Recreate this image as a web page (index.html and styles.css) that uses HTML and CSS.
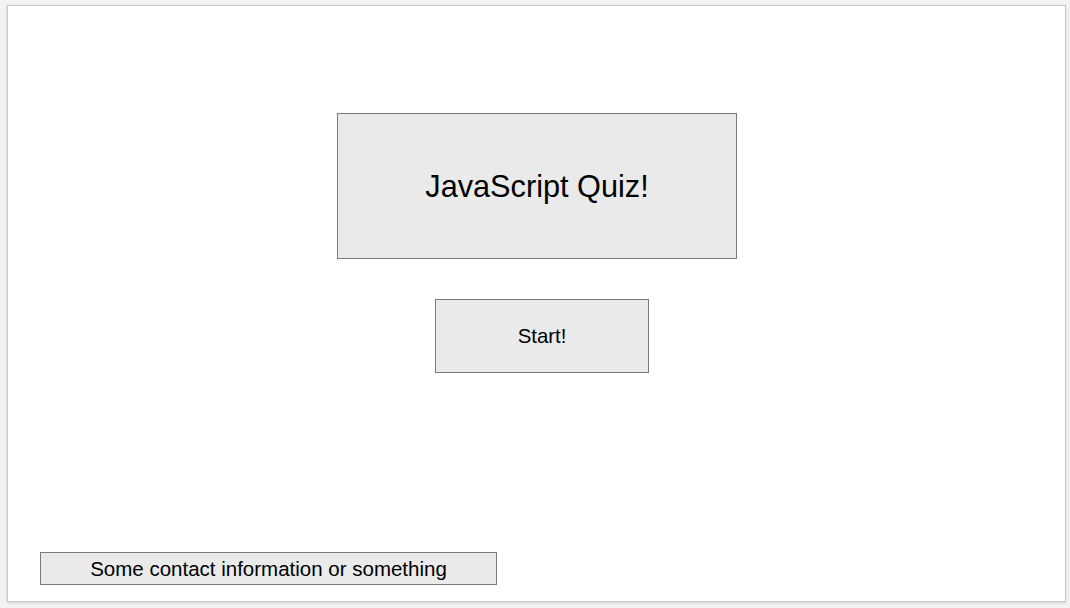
FILE: index.html
```html
<!DOCTYPE html>
<html>
<head>
<meta charset="utf-8">
<link rel="stylesheet" href="styles.css">
</head>
<body>
<div class="slide">
  <div class="title-box">JavaScript Quiz!</div>
  <div class="start-box">Start!</div>
  <div class="spacer"></div>
  <div class="contact-box">Some contact information or something</div>
</div>
</body>
</html>
```

FILE: styles.css
```css
html, body {
  margin: 0;
  padding: 0;
  height: 100%;
}
body {
  background: #f1f3f4;
  font-family: "Liberation Sans", Arial, sans-serif;
  color: #000;
  padding: 5px 0 0 7px;
  box-sizing: border-box;
}
.slide {
  width: 1059px;
  height: 597px;
  box-sizing: border-box;
  background: #fff;
  border: 1px solid #c8c8c8;
  box-shadow: 0 1px 3px rgba(0,0,0,0.12);
  display: flex;
  flex-direction: column;
  align-items: flex-start;
}
.title-box {
  margin: 107px 0 0 329px;
  width: 400px;
  height: 146px;
  box-sizing: border-box;
  background: #eaeaea;
  border: 1px solid #7a7a7a;
  display: flex;
  align-items: center;
  justify-content: center;
  font-size: 30.7px;
  padding-top: 1px;
}
.start-box {
  margin: 40px 0 0 427px;
  width: 214px;
  height: 74px;
  box-sizing: border-box;
  background: #eaeaea;
  border: 1px solid #7a7a7a;
  display: flex;
  align-items: center;
  justify-content: center;
  font-size: 20.4px;
  padding-top: 1px;
}
.spacer {
  flex: 1;
}
.contact-box {
  margin: 0 0 16px 32px;
  width: 457px;
  height: 33px;
  box-sizing: border-box;
  background: #eaeaea;
  border: 1px solid #7a7a7a;
  display: flex;
  align-items: center;
  justify-content: center;
  font-size: 20.5px;
  padding-top: 1px;
}
```
